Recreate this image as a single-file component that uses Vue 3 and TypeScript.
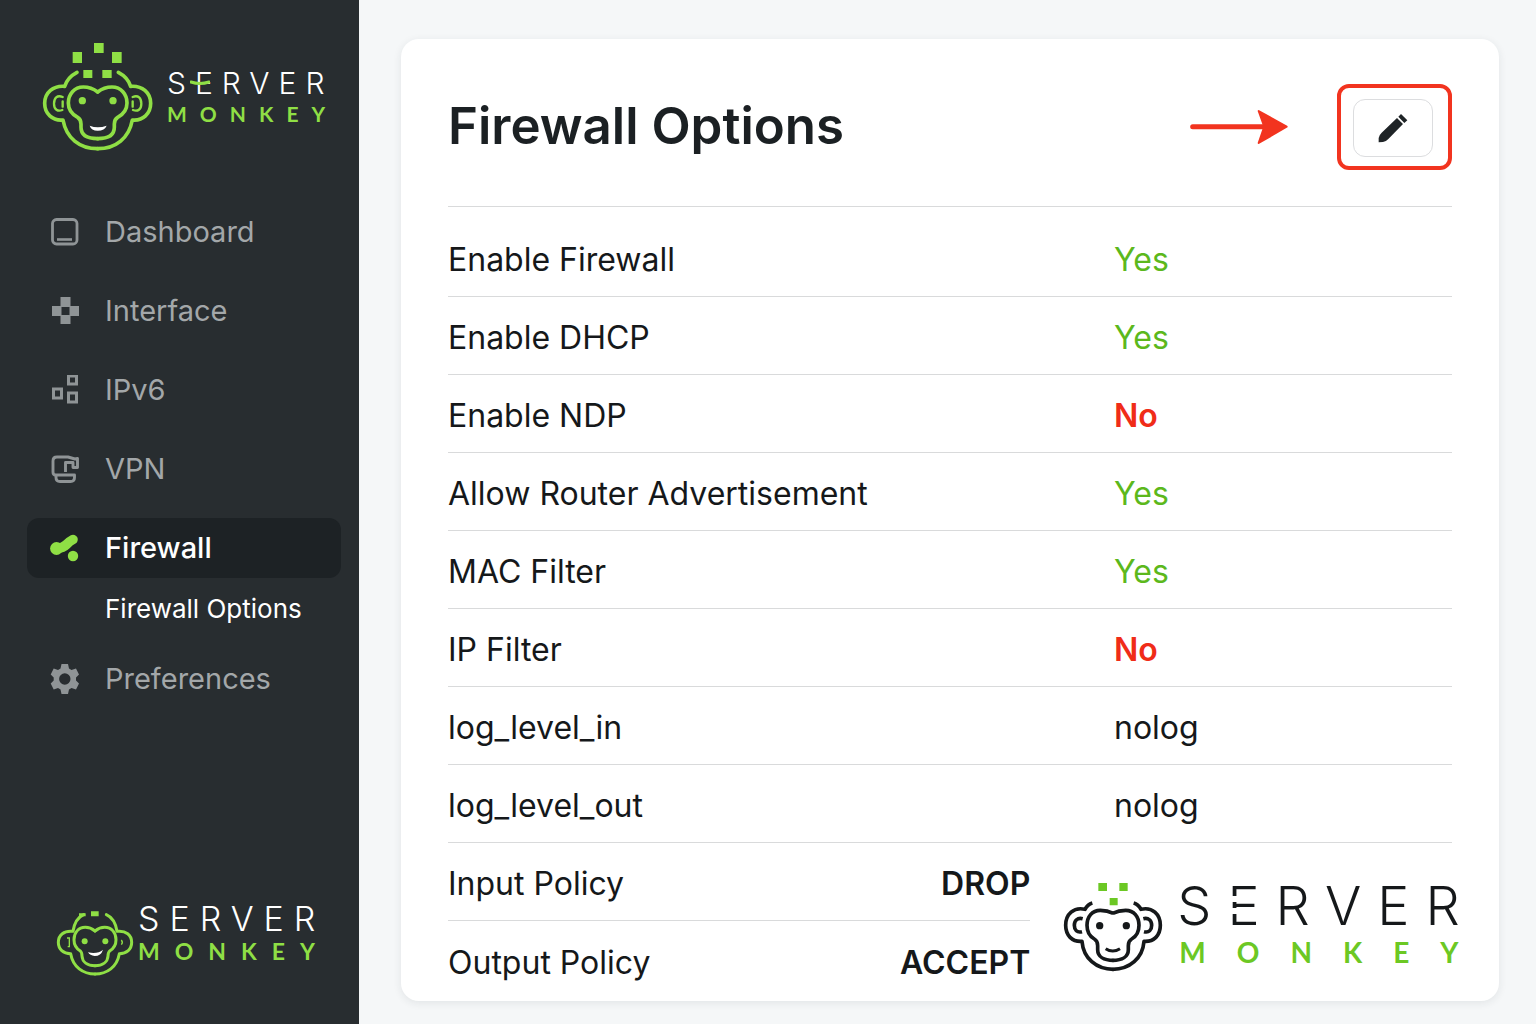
<script setup lang="ts">
interface NavItem {
  label: string
  icon: string
  active?: boolean
  children?: string[]
}

interface OptionRow {
  label: string
  value: string
  tone: 'yes' | 'no' | 'plain'
}

const navItems: NavItem[] = [
  { label: 'Dashboard', icon: 'dashboard' },
  { label: 'Interface', icon: 'interface' },
  { label: 'IPv6', icon: 'ipv6' },
  { label: 'VPN', icon: 'vpn' },
  { label: 'Firewall', icon: 'firewall', active: true, children: ['Firewall Options'] },
  { label: 'Preferences', icon: 'preferences' },
]

const options: OptionRow[] = [
  { label: 'Enable Firewall', value: 'Yes', tone: 'yes' },
  { label: 'Enable DHCP', value: 'Yes', tone: 'yes' },
  { label: 'Enable NDP', value: 'No', tone: 'no' },
  { label: 'Allow Router Advertisement', value: 'Yes', tone: 'yes' },
  { label: 'MAC Filter', value: 'Yes', tone: 'yes' },
  { label: 'IP Filter', value: 'No', tone: 'no' },
  { label: 'log_level_in', value: 'nolog', tone: 'plain' },
  { label: 'log_level_out', value: 'nolog', tone: 'plain' },
]

const policies = [
  { label: 'Input Policy', value: 'DROP' },
  { label: 'Output Policy', value: 'ACCEPT' },
]
</script>

<template>
  <div class="layout">
    <aside class="sidebar">
      <a href="#" class="brand brand-top">
        <svg class="brand-mark" width="115" height="114" viewBox="30 30 345 342" fill="none" aria-hidden="true">
          <g v-for="side in 2" :key="side" :transform="side === 2 ? 'translate(406 0) scale(-1 1)' : undefined" stroke="#8fdf45" stroke-width="11" stroke-linecap="round" stroke-linejoin="round">
            <path d="M141 127C122 137 110 150 104 169C70 166 44 188 44 220C44 251 67 273 99 270C109 324 148 356 203 356" />
            <path d="M203 186C190 176 176 171 160 171C133 171 115 193 115 219C115 240 126 253 143 262C151 267 153 272 153 282V292C153 315 170 326 203 326" />
            <path d="M98 201C81 194 72 205 72 221C72 238 83 246 97 240M98 214V230" stroke-width="7" />
            <circle cx="157" cy="212" r="11" fill="#8fdf45" stroke="none" />
          </g>
          <path d="M179 287Q203 297 230 287Q224 302 203 302Q184 302 179 287Z" fill="#fff" />
          <path d="M128 66h28v33h-28zM192 39h29v30h-29zM246 66h29v33h-29zM160 120h27v24h-27zM217 120h28v24h-28z" fill="#8fdf45" />
        </svg>
        <span class="wordmark">
          <span class="word-server">SERVER</span>
          <span class="word-monkey">MONKEY</span>
          <svg class="swash" width="20" height="6" viewBox="0 0 20 6" fill="none" aria-hidden="true">
            <path d="M1 2Q10 5 19 2" stroke="#8fdf45" stroke-width="3" stroke-linecap="round" />
          </svg>
        </span>
      </a>

      <nav aria-label="Main">
        <ul class="nav">
          <li v-for="item in navItems" :key="item.label">
            <a href="#" class="nav-link" :class="{ active: item.active }">
              <svg class="nav-icon" width="30" height="30" viewBox="0 0 30 30" fill="none" aria-hidden="true">
                <template v-if="item.icon === 'dashboard'">
                  <rect x="2.500" y="2.500" width="24.500" height="24.500" rx="4" stroke="currentColor" stroke-width="2.800" />
                  <path d="M7 22.500h15" stroke="currentColor" stroke-width="2.600" />
                </template>
                <path v-else-if="item.icon === 'interface'" d="M10.500 1h10v9h8.500v10h-8.500v8h-10v-8H2V10h8.500zM11.500 11v8h8v-8z" fill="currentColor" fill-rule="evenodd" />
                <g v-else-if="item.icon === 'ipv6'" stroke="currentColor" stroke-width="3">
                  <path d="M3.500 14h8v9h-8zM18.500 1h8v8h-8zM18.500 18h8v9h-8z" />
                </g>
                <g v-else-if="item.icon === 'vpn'" stroke="currentColor" stroke-width="2.900" stroke-linejoin="round">
                  <path d="M5.500 21Q3 21 3 18V7Q3 3 7 3H18L25 5L27.500 4.500V13.500H23V8.500H15.500V18" />
                  <path d="M6 21H24.500V23.500Q24.500 27.500 20.500 27.500H10Q6 27.500 6 23.500Z" />
                </g>
                <g v-else-if="item.icon === 'firewall'" fill="#8fdf45" stroke="#8fdf45">
                  <circle cx="6.500" cy="15.500" r="6.400" stroke="none" />
                  <path d="M7 15.300Q13 15 16.500 11.500T23 6.500" fill="none" stroke-width="9.600" stroke-linecap="round" />
                  <circle cx="23" cy="23" r="5.200" stroke="none" />
                </g>
                <path v-else fill="currentColor" fill-rule="evenodd" d="M11.500 0h6.500l1 4.600 2.500 1.400L26 4.600 29 10.400 26 13.500v3L29 19.600 26 25.400 21.500 24 19 25.400 18 30h-6.500l-1-4.600L8 24 3.700 25.400.700 19.600 3.700 16.500v-3L.700 10.400 3.700 4.600 8 6l2.500-1.400zM14.800 9.300a5.700 5.700 0 1 0 0 11.400a5.700 5.700 0 1 0 0-11.400z" />
              </svg>
              <span class="nav-label">{{ item.label }}</span>
            </a>
            <ul v-if="item.children" class="subnav">
              <li v-for="child in item.children" :key="child">
                <a href="#" class="sub-link" aria-current="page">{{ child }}</a>
              </li>
            </ul>
          </li>
        </ul>
      </nav>

      <a href="#" class="brand brand-bottom">
        <svg class="brand-mark" width="80" height="72" viewBox="46 50 240 216" fill="none" aria-hidden="true">
          <g v-for="side in 2" :key="side" :transform="side === 2 ? 'translate(332 0) scale(-1 1)' : undefined" stroke="#8fdf45" stroke-width="9" stroke-linecap="round" stroke-linejoin="round">
            <path d="M132 73C116 80 104 98 100 123C73 120 56 134 56 156C56 177 71 190 93 190C100 230 130 251 166 251" />
            <path d="M166 122C156 114 148 111 137 111C116 111 103 127 103 148C103 165 110 174 121 181C126 185 127 190 127 197C128 215 143 226 166 226" />
            <circle cx="135" cy="153" r="9" fill="#8fdf45" stroke="none" />
          </g>
          <path d="M82 143h7v26h-5M245 149q6 7 0 14" stroke="#8fdf45" stroke-width="4" />
          <path d="M145 186Q174 192 190 178Q184 197 165 197Q151 196 145 186Z" fill="#fff" />
          <path d="M154 63h23v15h-23zM118 69h20v9h-20z" fill="#8fdf45" />
        </svg>
        <span class="wordmark">
          <span class="word-server">SERVER</span>
          <span class="word-monkey">MONKEY</span>
        </span>
      </a>
    </aside>

    <main class="content">
      <section class="card">
        <header class="card-header">
          <h1>Firewall Options</h1>
          <svg class="arrow" width="98" height="36" viewBox="62 118 294 108" fill="none" aria-hidden="true">
            <path d="M70 171H290" stroke="#f2341f" stroke-width="15" stroke-linecap="round" />
            <path d="M352 171L268 124L285 171L268 220Z" fill="#f2341f" stroke="#f2341f" stroke-width="6" stroke-linejoin="round" />
          </svg>
          <div class="highlight">
            <button type="button" class="edit" aria-label="Edit firewall options">
              <svg width="30" height="30" viewBox="0 0 90 90" aria-hidden="true">
                <path d="M57 15L75 33L31 78Q24 86 15 87L2 88V75Q4 65 11 59ZM61 11L69 3L88 22L79 30Z" fill="#1f2427" />
              </svg>
            </button>
          </div>
        </header>

        <table class="options">
          <tbody>
            <tr v-for="row in options" :key="row.label">
              <th scope="row">{{ row.label }}</th>
              <td :class="row.tone">{{ row.value }}</td>
            </tr>
          </tbody>
        </table>

        <div class="card-footer">
          <table class="policies">
            <tbody>
              <tr v-for="policy in policies" :key="policy.label">
                <th scope="row">{{ policy.label }}</th>
                <td>{{ policy.value }}</td>
              </tr>
            </tbody>
          </table>
          <a href="#" class="brand brand-card">
            <svg class="brand-mark" width="100" height="92" viewBox="38 32 300 276" fill="none" aria-hidden="true">
              <g v-for="side in 2" :key="side" :transform="side === 2 ? 'translate(376 0) scale(-1 1)' : undefined" stroke="#15181a" stroke-width="11" stroke-linejoin="round">
                <path d="M126 98Q112 102 104 117C70 109 46 132 46 165C46 195 65 215 95 213C99 264 138 297 189 297" />
                <path d="M189 129C175 122 165 120 150 120C125 120 110 139 110 165C110 185 117 198 132 206C141 211 142 216 142 226V238C142 258 160 270 189 270" />
                <path d="M97 145C81 141 72 151 72 165C72 179 80 188 95 184" />
                <circle cx="148" cy="166" r="11" fill="#15181a" stroke="none" />
              </g>
              <path d="M166 235Q187 249 209 235" stroke="#15181a" stroke-width="9" />
              <path d="M144 38h26v24h-26zM207 38h25v24h-25zM178 83h24v22h-24z" fill="#6cc824" />
            </svg>
            <span class="wordmark">
              <span class="word-server">SERVER</span>
              <span class="word-monkey">MONKEY</span>
              <svg class="stem-gaps" width="8" height="18" viewBox="0 0 8 18" aria-hidden="true">
                <path d="M0 0h8v6H0zM0 12h8v6H0z" fill="#fff" />
              </svg>
            </span>
          </a>
        </div>
      </section>
    </main>
  </div>
</template>

<style>
body {
  margin: 0;
  background: #f5f7f8;
}
</style>

<style scoped>
* {
  box-sizing: border-box;
}

.layout {
  display: flex;
  min-height: 100vh;
  font-family: Inter, "Liberation Sans", sans-serif;
  color: #15181a;
}

a {
  color: inherit;
  text-decoration: none;
}

ul {
  list-style: none;
  margin: 0;
  padding: 0;
}

.sidebar {
  flex: 0 0 359px;
  min-width: 0;
  display: flex;
  flex-direction: column;
  padding: 40px 18px 45px 27px;
  background: #282d30;
}

.brand {
  display: flex;
  align-items: flex-start;
}

.brand-mark {
  flex: none;
}

.wordmark {
  position: relative;
  display: flex;
  flex-direction: column;
  white-space: nowrap;
}

.word-server {
  font-weight: 300;
}

.word-monkey {
  font-family: Lato, "Liberation Sans", sans-serif;
  font-weight: 700;
  color: #8fdf45;
}

.brand-top {
  padding-left: 13px;
  margin-bottom: 48px;
}

.brand-top .wordmark {
  padding: 25px 0 0 12px;
}

.brand-top .word-server {
  font-size: 30px;
  line-height: 36px;
  letter-spacing: 9px;
  color: #fff;
}

.brand-top .word-monkey {
  font-size: 21px;
  line-height: 26px;
  letter-spacing: 13px;
}

.swash {
  position: absolute;
  left: 35px;
  top: 40px;
}

.nav {
  display: flex;
  flex-direction: column;
  gap: 19px;
}

.nav-link {
  display: flex;
  align-items: center;
  gap: 25px;
  height: 60px;
  padding-left: 23px;
  border-radius: 12px;
  font-size: 29px;
  color: #a3a7a9;
}

.nav-label {
  padding-bottom: 1px;
}

.nav-icon {
  flex: none;
  color: #8f9496;
}

.nav-link.active {
  background: #1d2225;
  color: #fff;
  font-weight: 500;
}

.subnav {
  padding: 10px 0 0 78px;
}

.sub-link {
  display: block;
  font-size: 26px;
  line-height: 42px;
  color: #fff;
  white-space: nowrap;
}

.brand-bottom {
  margin-top: auto;
  padding-left: 28px;
}

.brand-bottom .brand-mark {
  margin-top: 6px;
}

.brand-bottom .wordmark {
  padding-left: 3px;
}

.brand-bottom .word-server {
  font-size: 34px;
  line-height: 36px;
  letter-spacing: 10px;
  color: #fff;
}

.brand-bottom .word-monkey {
  font-size: 23px;
  line-height: 28px;
  letter-spacing: 15px;
}

.content {
  flex: 1;
  min-width: 0;
  padding: 39px 37px 23px 42px;
}

.card {
  padding: 45px 47px 2px;
  border-radius: 18px;
  background: #fff;
  box-shadow: 0 2px 8px rgba(30, 40, 50, 0.09);
}

.card-header {
  display: flex;
  align-items: center;
  padding-bottom: 36px;
  border-bottom: 1px solid #d9dadb;
}

h1 {
  flex: 1;
  margin: 0;
  padding-bottom: 2px;
  font-size: 51px;
  line-height: 66px;
  font-weight: 600;
  color: #1b2023;
}

.arrow {
  margin-right: 49px;
}

.highlight {
  padding: 11px 15px 9px 12px;
  border: 4px solid #f2341f;
  border-radius: 12px;
}

.edit {
  display: flex;
  align-items: center;
  justify-content: center;
  width: 80px;
  height: 58px;
  padding: 0;
  border: 1px solid #dcdddf;
  border-radius: 12px;
  background: #fff;
}

table {
  border-collapse: collapse;
  width: 100%;
}

th,
td {
  height: 78px;
  padding: 5px 0 0;
  border-bottom: 1px solid #d9dadb;
  font-size: 32px;
  font-weight: 400;
  text-align: left;
  white-space: nowrap;
}

.options {
  margin-top: 11px;
}

.options td {
  width: 338px;
}

.options .yes {
  color: #5cb81c;
}

.options .no {
  color: #f02c18;
  font-weight: 600;
}

.card-footer {
  display: flex;
}

.policies {
  flex: 0 0 58%;
  width: 58%;
}

.policies td {
  font-weight: 600;
  text-align: right;
}

.policies tr:last-child > * {
  border-bottom: 0;
}

.brand-card {
  flex: none;
  margin: 0 -46px 0 33px;
  padding-top: 38px;
}

.brand-card .wordmark {
  padding-left: 14px;
}

.brand-card .word-server {
  font-size: 54px;
  line-height: 50px;
  letter-spacing: 16px;
}

.brand-card .word-monkey {
  padding-left: 2px;
  font-size: 28px;
  line-height: 42px;
  letter-spacing: 31px;
  color: #6cc824;
}

.stem-gaps {
  position: absolute;
  left: 66px;
  top: 15px;
}
</style>
